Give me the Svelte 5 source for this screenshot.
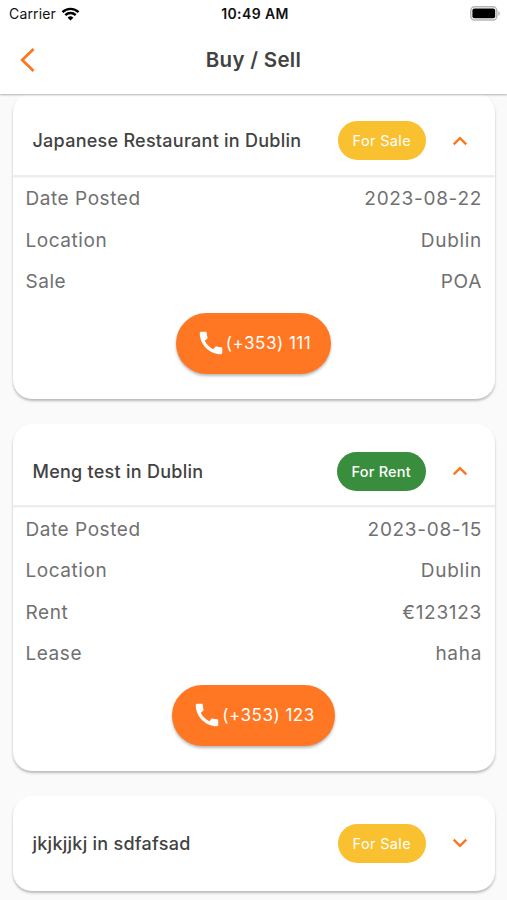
<script lang="ts">
	type Listing = {
		title: string;
		type: 'Sale' | 'Rent';
		open: boolean;
		details: { label: string; value: string }[];
		phone: string;
	};

	let listings: Listing[] = $state([
		{
			title: 'Japanese Restaurant in Dublin',
			type: 'Sale',
			open: true,
			details: [
				{ label: 'Date Posted', value: '2023-08-22' },
				{ label: 'Location', value: 'Dublin' },
				{ label: 'Sale', value: 'POA' }
			],
			phone: '(+353) 111'
		},
		{
			title: 'Meng test in Dublin',
			type: 'Rent',
			open: true,
			details: [
				{ label: 'Date Posted', value: '2023-08-15' },
				{ label: 'Location', value: 'Dublin' },
				{ label: 'Rent', value: '€123123' },
				{ label: 'Lease', value: 'haha' }
			],
			phone: '(+353) 123'
		},
		{
			title: 'jkjkjjkj in sdfafsad',
			type: 'Sale',
			open: false,
			details: [],
			phone: ''
		}
	]);
</script>

<div class="screen">
	<header>
		<div class="status">
			<div class="carrier">
				<span>Carrier</span>
				<svg width="19" height="14" viewBox="0 0 18 14">
					<path d="M1 5.2a11.4 11.4 0 0 1 16 0" />
					<path d="M3.8 8.1a7.4 7.4 0 0 1 10.4 0" />
					<path class="dot" d="M9 13.6 6.1 10.7a4.1 4.1 0 0 1 5.8 0z" />
				</svg>
			</div>
			<span class="time">10:49 AM</span>
			<svg class="battery" width="31" height="15" viewBox="0 0 31 15">
				<rect x="0.8" y="0.8" width="26" height="13.2" rx="3.8" fill="#fff" stroke="#b5b5b5" stroke-width="1.5" />
				<rect x="2.4" y="2.5" width="22.8" height="9.8" rx="2" />
				<path d="M28.3 5v5c2-.8 2-4.2 0-5z" fill="#b5b5b5" />
			</svg>
		</div>
		<nav>
			<button class="back" aria-label="Back">
				<svg width="16" height="26" viewBox="0 0 16 26">
					<path d="M13.6 2 2.2 13l11.4 11" />
				</svg>
			</button>
			<h1>Buy / Sell</h1>
		</nav>
	</header>

	<main>
		{#each listings as listing}
			<section class="card">
				<button class="summary" onclick={() => (listing.open = !listing.open)}>
					<span class="title">{listing.title}</span>
					<span class="tag" class:rent={listing.type === 'Rent'}>For {listing.type}</span>
					<svg class="chevron" class:open={listing.open} width="16" height="10" viewBox="0 0 16 10">
						<path d="M1.7 1.6 8 7.9l6.3-6.3" />
					</svg>
				</button>
				{#if listing.open}
					<div class="details">
						{#each listing.details as row}
							<div class="row">
								<span>{row.label}</span>
								<span>{row.value}</span>
							</div>
						{/each}
						{#if listing.phone}
							<button class="call">
								<svg width="30" height="30" viewBox="0 0 24 24">
									<path
										d="M20.01 15.38c-1.23 0-2.42-.2-3.53-.56a.977.977 0 0 0-1.01.24l-1.57 1.97c-2.83-1.35-5.48-3.9-6.89-6.83l1.95-1.66c.27-.28.35-.67.24-1.02-.37-1.11-.56-2.3-.56-3.53 0-.54-.45-.99-.99-.99H4.19C3.65 3 3 3.24 3 3.99 3 13.28 10.73 21 20.01 21c.71 0 .99-.63.99-1.18v-3.45c0-.54-.45-.99-.99-.99z"
									/>
								</svg>
								<span>{listing.phone}</span>
							</button>
						{/if}
					</div>
				{/if}
			</section>
		{/each}
	</main>
</div>

<style>
	:global(body) {
		background: #fafafa;
	}
	.screen {
		height: 900px;
		overflow: hidden;
		background: #fafafa;
		font-family: Inter, 'Liberation Sans', sans-serif;
		color: #424242;
	}
	button {
		border: 0;
		padding: 0;
		background: none;
		font: inherit;
		color: inherit;
		cursor: pointer;
	}
	span {
		white-space: nowrap;
	}

	header {
		position: relative;
		z-index: 1;
		height: 94px;
		background: #fff;
		box-shadow: 0 1px 2px rgba(0, 0, 0, 0.3);
	}
	.status {
		display: grid;
		grid-template-columns: 1fr auto 1fr;
		align-items: center;
		height: 27px;
		padding: 0 6px 0 9px;
		color: #111;
		font-size: 14px;
	}
	.carrier {
		display: flex;
		align-items: center;
		gap: 5px;
		letter-spacing: 0.15px;
	}
	.carrier svg {
		fill: none;
		stroke: #000;
		stroke-width: 2.4;
	}
	.carrier .dot {
		fill: #000;
		stroke: none;
	}
	.time {
		font-weight: 600;
		letter-spacing: 0.4px;
	}
	.battery {
		justify-self: end;
	}
	nav {
		display: grid;
		grid-template-columns: 60px 1fr 60px;
		align-items: center;
		height: 65px;
	}
	.back {
		display: flex;
		padding-left: 20px;
	}
	.back path {
		fill: none;
		stroke: #fb7822;
		stroke-width: 2.8;
	}
	h1 {
		margin: 0;
		font-size: 20.5px;
		font-weight: 600;
		line-height: 24px;
		letter-spacing: 0.3px;
		text-align: center;
	}

	main {
		display: flex;
		flex-direction: column;
		gap: 25px;
		margin-top: -1px;
		padding: 0 12.5px;
	}
	.card {
		flex: none;
		border-radius: 19px;
		background: #fff;
		box-shadow: 0 2px 2.5px rgba(0, 0, 0, 0.26);
	}
	.summary {
		display: flex;
		align-items: center;
		width: 100%;
		height: 68px;
		margin: 13.5px 0;
		padding: 0 26.5px 0 20px;
		text-align: left;
	}
	.summary:has(+ .details) {
		margin-bottom: 0;
	}
	.title {
		flex: 1;
		font-size: 18px;
		font-weight: 500;
		letter-spacing: 0.26px;
	}
	.tag {
		padding: 0 14.5px;
		border-radius: 20px;
		background: #f9c02f;
		color: #fff;
		font-size: 14.5px;
		line-height: 39px;
		letter-spacing: 0.35px;
	}
	.tag.rent {
		background: #388e3c;
		font-weight: 500;
		letter-spacing: 0.25px;
	}
	.chevron {
		margin-left: 26.5px;
	}
	.chevron.open {
		transform: rotate(180deg);
	}
	.chevron path {
		fill: none;
		stroke: #fb7822;
		stroke-width: 2.4;
	}

	.details {
		display: flex;
		flex-direction: column;
		padding: 1.5px 0 25px;
		border-top: 2px solid #ededed;
		box-shadow: inset 0 1px 1px rgba(0, 0, 0, 0.03);
		border-radius: 0 0 19px 19px;
	}
	.row {
		display: flex;
		align-items: center;
		justify-content: space-between;
		height: 41.5px;
		padding: 0 12.5px 0 13px;
		color: #707070;
		font-size: 19px;
		letter-spacing: 0.55px;
	}
	.row span:last-child {
		letter-spacing: 0.7px;
	}
	.call {
		display: flex;
		align-items: center;
		align-self: center;
		height: 61px;
		margin-top: 10px;
		padding: 0 20px;
		border-radius: 31px;
		background: #ff7722;
		box-shadow: 0 2px 3px rgba(0, 0, 0, 0.28);
		color: #fff;
		font-size: 17px;
		letter-spacing: 0.5px;
	}
	.call path {
		fill: #fff;
	}
</style>
